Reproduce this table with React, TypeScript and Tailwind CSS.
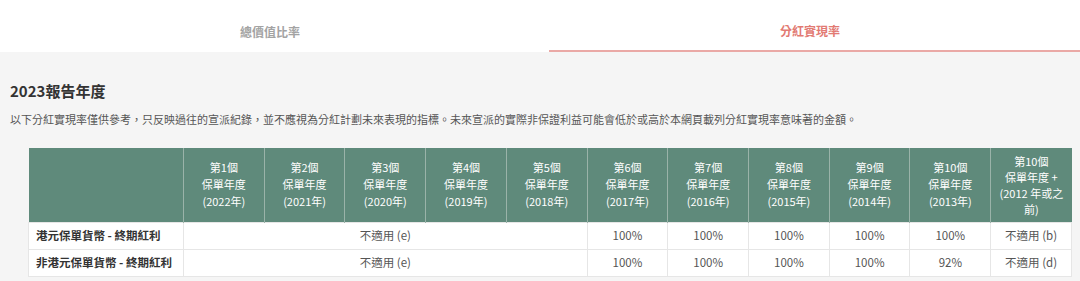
import React from "react";

type Row = {
  label: string;
  values: string[];
  notApplicable: string;
};

const font = {
  fontFamily: '"Noto Sans CJK TC", "Noto Sans", "Liberation Sans", sans-serif',
};

const years = [
  { n: "第1個", y: "(2022年)" },
  { n: "第2個", y: "(2021年)" },
  { n: "第3個", y: "(2020年)" },
  { n: "第4個", y: "(2019年)" },
  { n: "第5個", y: "(2018年)" },
  { n: "第6個", y: "(2017年)" },
  { n: "第7個", y: "(2016年)" },
  { n: "第8個", y: "(2015年)" },
  { n: "第9個", y: "(2014年)" },
  { n: "第10個", y: "(2013年)" },
];

const rows: Row[] = [
  {
    label: "港元保單貨幣 - 終期紅利",
    values: ["100%", "100%", "100%", "100%", "100%", "不適用 (b)"],
    notApplicable: "不適用 (e)",
  },
  {
    label: "非港元保單貨幣 - 終期紅利",
    values: ["100%", "100%", "100%", "100%", "92%", "不適用 (d)"],
    notApplicable: "不適用 (e)",
  },
];

export default function App(): React.JSX.Element {
  return (
    <div className="min-h-screen bg-[#f5f5f5]" style={font}>
      {/* Tabs */}
      <div className="grid grid-cols-2 bg-white h-[52px]">
        <div className="flex items-center justify-center pt-[12px] text-[12px] font-bold text-[#a3a3a3]">
          總價值比率
        </div>
        <div className="flex items-center justify-center pt-[12px] ml-[9px] border-b-2 border-[#eaa9a6] text-[12px] font-bold text-[#e27a73]">
          <span className="-ml-[9px]">分紅實現率</span>
        </div>
      </div>

      <div className="px-[10px] pt-[28px]">
        <h2 className="text-[15px] leading-[22px] font-bold text-[#333]">2023報告年度</h2>
        <p className="mt-[9px] text-[11px] leading-[16px] text-[#555]">
          以下分紅實現率僅供參考，只反映過往的宣派紀錄，並不應視為分紅計劃未來表現的指標。未來宣派的實際非保證利益可能會低於或高於本網頁載列分紅實現率意味著的金額。
        </p>

        {/* Table */}
        <div className="mt-[21px] ml-[18px] w-[1044px]">
          <table className="w-full table-fixed border-collapse">
            <colgroup>
              <col className="w-[155px]" />
              {Array.from({ length: 11 }).map((_, i) => (
                <col key={i} />
              ))}
            </colgroup>
            <thead>
              <tr className="h-[74px] bg-[#5f8a7b] text-white text-[11px] leading-[17px]">
                <th className="border-r border-[#9ab3a9]" />
                {years.map((item) => (
                  <th key={item.y} className="font-normal border-r border-[#9ab3a9] align-middle">
                    <div>{item.n}</div>
                    <div>保單年度</div>
                    <div>{item.y}</div>
                  </th>
                ))}
                <th className="font-normal px-[4px] leading-[16px] align-middle">
                  <div>第10個</div>
                  <div>保單年度 +</div>
                  <div>(2012 年或之</div>
                  <div>前)</div>
                </th>
              </tr>
            </thead>
            <tbody className="bg-white text-[11.5px] text-[#555]">
              {rows.map((row) => (
                <tr key={row.label} className="h-[27px]">
                  <td className="border border-[#e6e6e6] pl-[7px] font-bold text-[#333]">{row.label}</td>
                  <td colSpan={5} className="border border-[#e6e6e6] text-center">
                    {row.notApplicable}
                  </td>
                  {row.values.map((v, i) => (
                    <td key={i} className="border border-[#e6e6e6] text-center">
                      {v}
                    </td>
                  ))}
                </tr>
              ))}
            </tbody>
          </table>
        </div>
      </div>
    </div>
  );
}
